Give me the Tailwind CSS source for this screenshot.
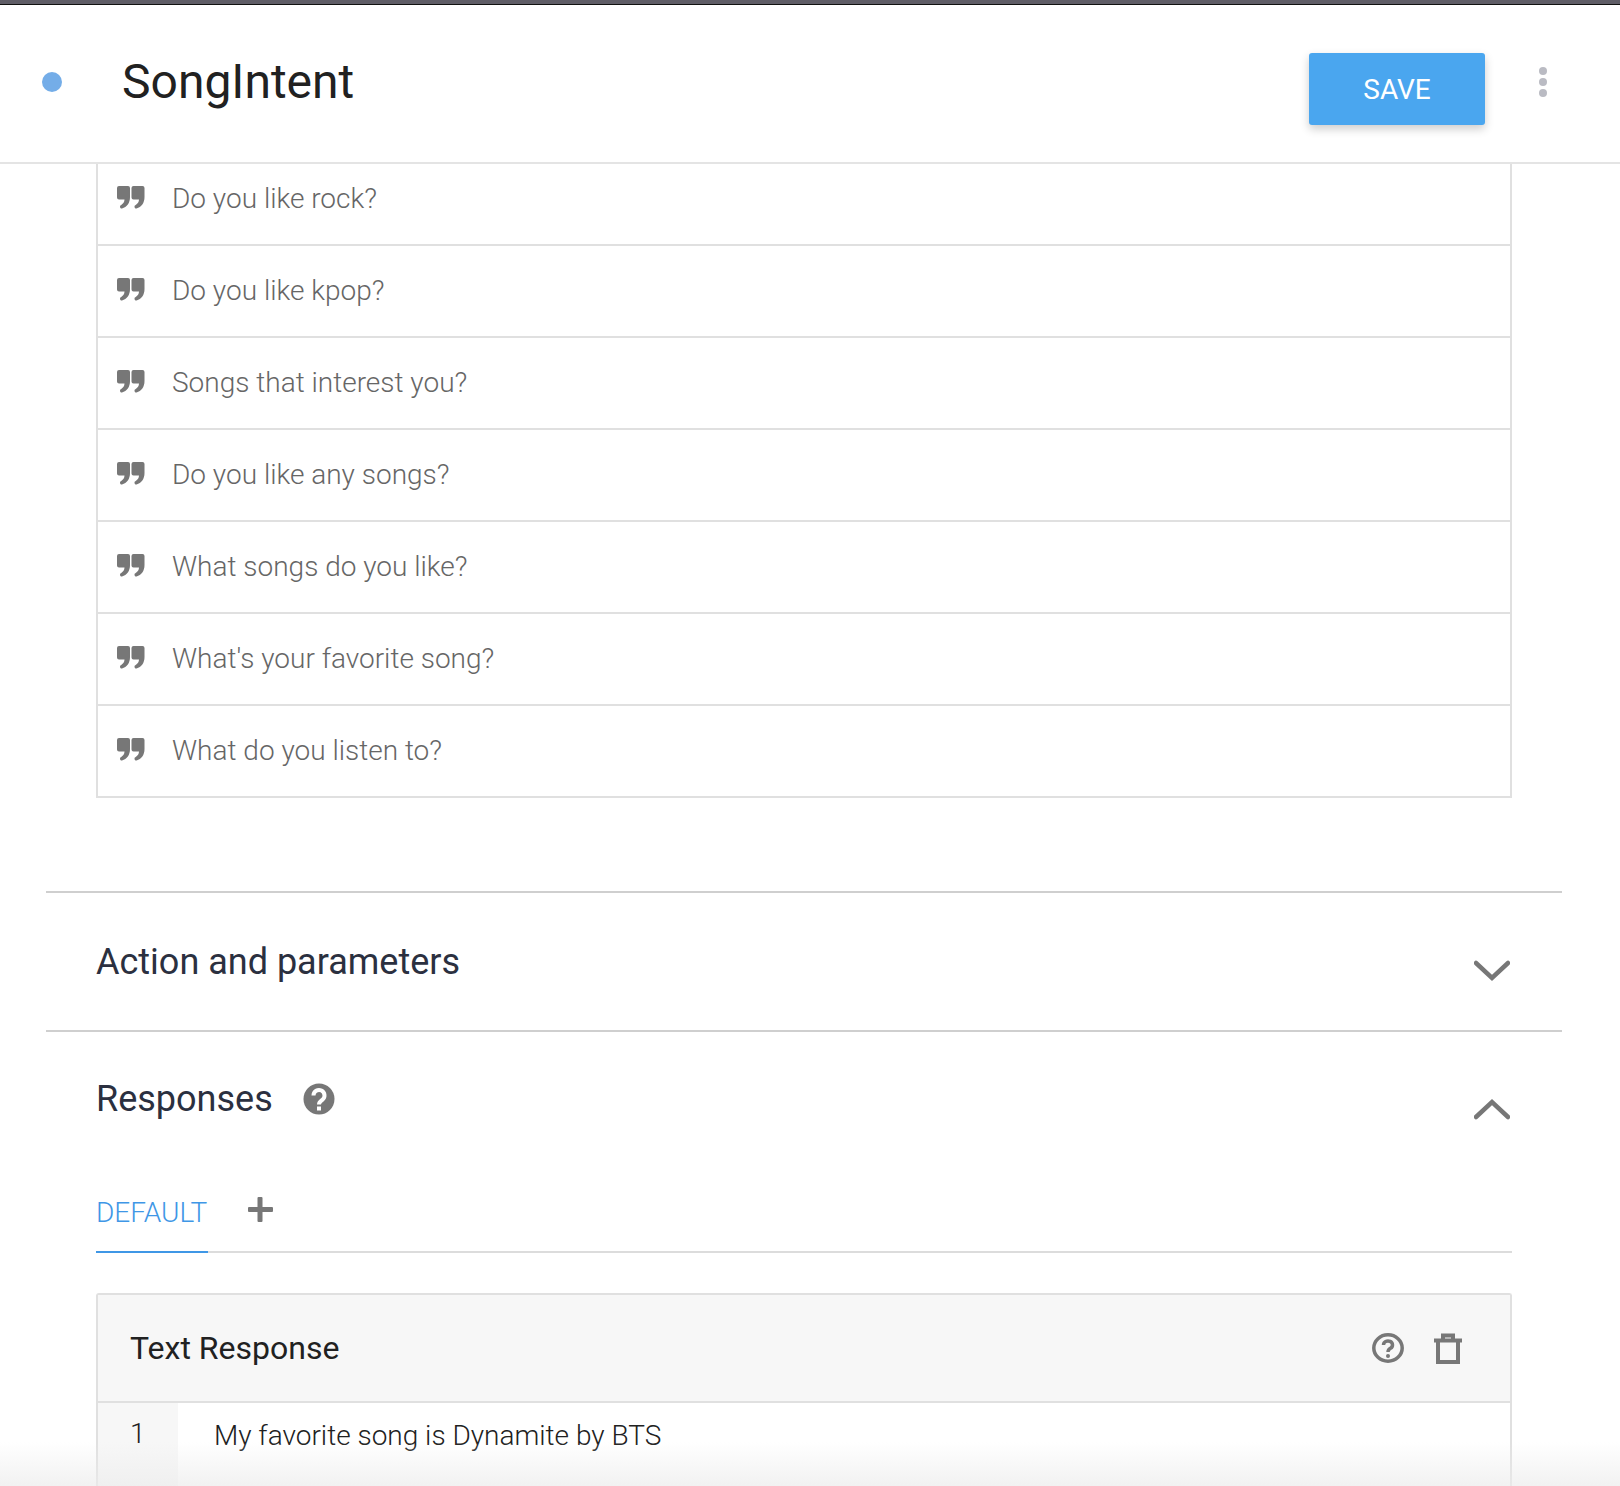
<!DOCTYPE html>
<html><head><meta charset="utf-8"><script src="https://cdn.jsdelivr.net/npm/@tailwindcss/browser@4"></script></head>
<body class="bg-white">
<svg class="hidden"><defs><symbol id="q" viewBox="0 0 28 23"><path d="M2 0h9a2 2 0 0 1 2 2v9c0 6-3 10-8 11.500-1 .3-2-.5-2-1.800 0-1 .6-1.500 1.500-2 1.500-1 3-2.500 3-5.200H2a2 2 0 0 1-2-2V2a2 2 0 0 1 2-2z"/><path transform="translate(14.500 0)" d="M2 0h9a2 2 0 0 1 2 2v9c0 6-3 10-8 11.500-1 .3-2-.5-2-1.800 0-1 .6-1.500 1.500-2 1.500-1 3-2.500 3-5.200H2a2 2 0 0 1-2-2V2a2 2 0 0 1 2-2z"/></symbol></defs></svg>
<div class="relative w-[1620px] h-[1486px] overflow-hidden bg-white font-['Roboto',sans-serif]">
  <div class="h-[4px] bg-[#5f5d66]"></div>
  <div class="h-[1px] bg-[#111]"></div>
  <header class="h-[159px] border-b-2 border-[#e4e4e4] flex items-start">
    <div class="w-[20px] h-[20px] rounded-full bg-[#74ade8] ml-[42px] mt-[67px]"></div>
    <h1 class="ml-[60px] mt-[49px] text-[48px] leading-[56px] font-normal text-[#212121]">SongIntent</h1>
    <button class="ml-auto mt-[48px] w-[176px] h-[72px] pt-[2px] rounded-[3px] bg-[#4aa6ef] text-white text-[28px] shadow-[0_4px_10px_rgba(0,0,0,0.2)]">SAVE</button>
    <div class="ml-[54px] mr-[73px] mt-[62px] flex flex-col gap-[3px]">
      <span class="w-[8px] h-[8px] rounded-full bg-[#babbc3]"></span>
      <span class="w-[8px] h-[8px] rounded-full bg-[#babbc3]"></span>
      <span class="w-[8px] h-[8px] rounded-full bg-[#babbc3]"></span>
    </div>
  </header>
  <main class="w-[1608px] px-[46px]">
    <div class="mx-[50px] border-x-2 border-b-2 border-[#e0e0e0] text-[#666] text-[28px] font-light">
      <div class="h-[82px] border-b-2 border-[#e0e0e0] flex items-start pl-[19px]"><svg class="mt-[22px] w-[28px] h-[23px]" fill="#777"><use href="#q"/></svg><span class="ml-[27px] mt-[18px] leading-[34px]">Do you like rock?</span></div>
      <div class="h-[92px] border-b-2 border-[#e0e0e0] flex items-start pl-[19px]"><svg class="mt-[32px] w-[28px] h-[23px]" fill="#777"><use href="#q"/></svg><span class="ml-[27px] mt-[28px] leading-[34px]">Do you like kpop?</span></div>
      <div class="h-[92px] border-b-2 border-[#e0e0e0] flex items-start pl-[19px]"><svg class="mt-[32px] w-[28px] h-[23px]" fill="#777"><use href="#q"/></svg><span class="ml-[27px] mt-[28px] leading-[34px]">Songs that interest you?</span></div>
      <div class="h-[92px] border-b-2 border-[#e0e0e0] flex items-start pl-[19px]"><svg class="mt-[32px] w-[28px] h-[23px]" fill="#777"><use href="#q"/></svg><span class="ml-[27px] mt-[28px] leading-[34px]">Do you like any songs?</span></div>
      <div class="h-[92px] border-b-2 border-[#e0e0e0] flex items-start pl-[19px]"><svg class="mt-[32px] w-[28px] h-[23px]" fill="#777"><use href="#q"/></svg><span class="ml-[27px] mt-[28px] leading-[34px]">What songs do you like?</span></div>
      <div class="h-[92px] border-b-2 border-[#e0e0e0] flex items-start pl-[19px]"><svg class="mt-[32px] w-[28px] h-[23px]" fill="#777"><use href="#q"/></svg><span class="ml-[27px] mt-[28px] leading-[34px]">What's your favorite song?</span></div>
      <div class="h-[90px] flex items-start pl-[19px]"><svg class="mt-[32px] w-[28px] h-[23px]" fill="#777"><use href="#q"/></svg><span class="ml-[27px] mt-[28px] leading-[34px]">What do you listen to?</span></div>
    </div>
    <section class="mt-[93px] border-t-2 border-[#cfcfcf] h-[139px] px-[50px] flex items-start">
      <h2 class="mt-[47px] text-[36px] leading-[44px] font-normal text-[#2b3040]">Action and parameters</h2>
      <svg class="ml-auto mr-[2px] mt-[67px] w-[36px] h-[22px]" viewBox="0 0 36 22" fill="none" stroke="#777" stroke-width="4.500" stroke-linecap="round"><path d="M2 3l16 15L34 3"/></svg>
    </section>
    <section class="border-t-2 border-[#cfcfcf] px-[50px]">
      <div class="flex items-start">
        <h2 class="mt-[45px] text-[36px] leading-[44px] font-normal text-[#2b3040]">Responses</h2>
        <svg class="ml-[30px] mt-[51px] w-[32px] h-[32px]" viewBox="0 0 32 32"><circle cx="16" cy="16" r="15.500" fill="#777"/><path d="M10.500 12.500a5.500 5.500 0 1 1 8.800 4.400c-2 1.500-3.300 2.300-3.300 4.600" fill="none" stroke="#fff" stroke-width="4"/><rect x="14" y="23.500" width="4" height="4" fill="#fff"/></svg>
        <svg class="ml-auto mr-[2px] mt-[66px] w-[36px] h-[22px]" viewBox="0 0 36 22" fill="none" stroke="#777" stroke-width="4.500" stroke-linecap="round"><path d="M2 19L18 4l16 15"/></svg>
      </div>
      <div class="mt-[56px] h-[76px] border-b-2 border-[#dcdcdc] flex items-start relative">
        <div class="h-[76px] w-[112px] border-b-2 border-[#3f97e6] -mb-[2px] pt-[19px] text-[28px] leading-[34px] text-[#3f97e6] font-light">DEFAULT</div>
        <svg class="ml-[38px] mt-[18px] w-[28px] h-[28px]" viewBox="0 0 28 28" fill="#777"><rect x="11.500" y="2" width="5" height="25" rx="1"/><rect x="2" y="12" width="25" height="5" rx="1"/></svg>
      </div>
      <div class="mt-[40px] rounded-t-[3px] border-x-2 border-t-2 border-[#e0e0e0]">
        <div class="h-[108px] bg-[#f7f7f7] border-b-2 border-[#e0e0e0] flex items-start pl-[32px]">
          <span class="mt-[34px] text-[32px] leading-[38px] text-[#212121]">Text Response</span>
          <svg class="ml-auto mt-[38px] w-[32px] h-[30px]" viewBox="0 0 32 30" fill="none" stroke="#777" stroke-width="3.500"><ellipse cx="16" cy="15" rx="14.200" ry="13.200"/><path d="M11.500 12a4.500 4 0 1 1 7 3.300c-1.600 1-2.500 1.700-2.500 3.700"/><circle cx="16" cy="23" r="2" fill="#777" stroke="none"/></svg>
          <svg class="ml-[30px] mr-[48px] mt-[38px] w-[28px] h-[31px]" viewBox="0 0 28 31" fill="none" stroke="#777" stroke-width="4"><path d="M0 7.500h28"/><path d="M9 7V2.500h10V7"/><path d="M4 8v21h20V8"/></svg>
        </div>
        <div class="flex h-[100px]">
          <div class="w-[80px] bg-[#f7f7f7] pl-[32px] pt-[14px] text-[28px] leading-[34px] font-light text-[#212121]">1</div>
          <div class="pl-[36px] pt-[16px] text-[28px] leading-[34px] font-light text-[#212121]">My favorite song is Dynamite by BTS</div>
        </div>
      </div>
    </section>
  </main>
  <div class="absolute left-0 right-0 bottom-0 h-[44px] bg-gradient-to-b from-white/0 to-[#ececec]/70"></div>
</div>
</body></html>
